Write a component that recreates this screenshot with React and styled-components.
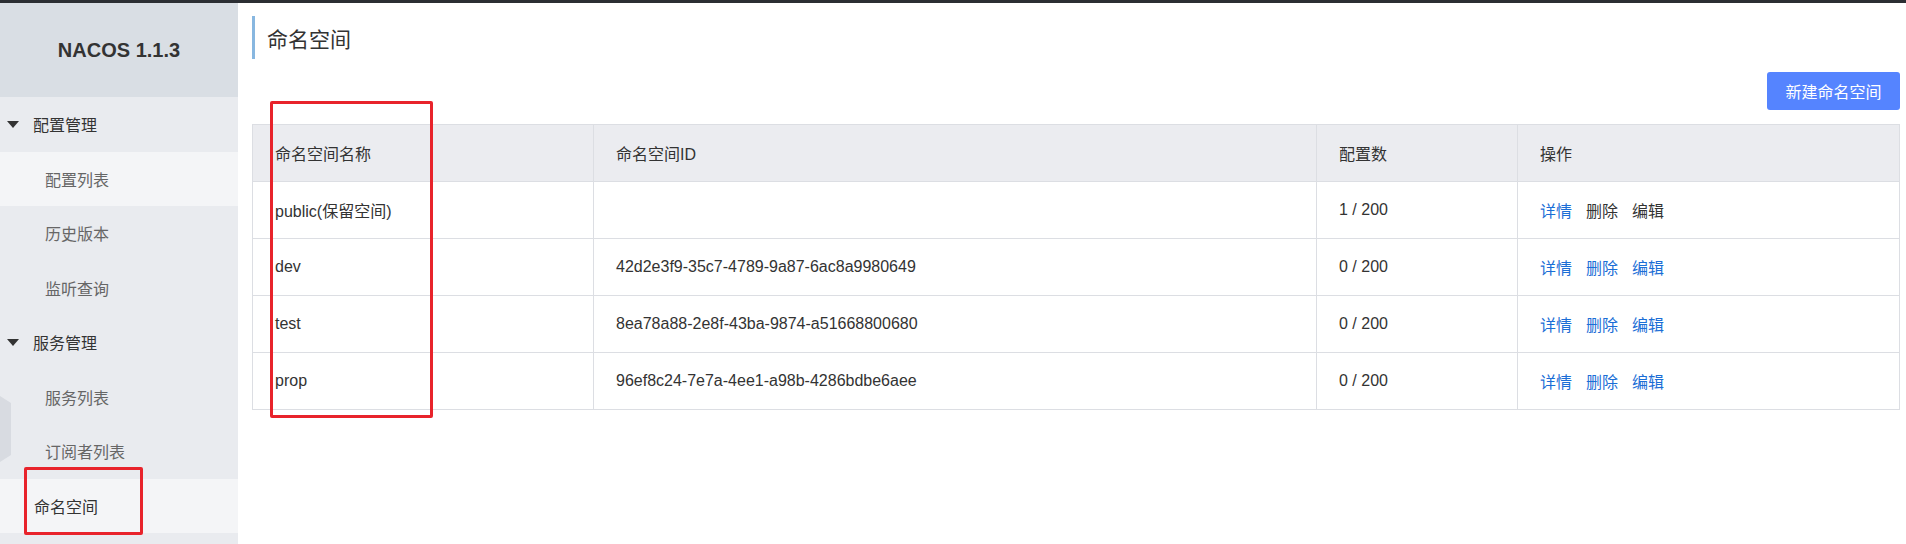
import React from 'react';
import styled, { createGlobalStyle } from 'styled-components';

const GlobalStyle = createGlobalStyle`
  html, body {
    margin: 0;
    padding: 0;
    background: #fff;
  }
  body {
    font-family: "Liberation Sans", "Noto Sans CJK SC", sans-serif;
    font-size: 16px;
    color: #333;
  }
`;

const Page = styled.div`
  position: relative;
  height: 544px;
  display: flex;
  flex-direction: column;
  overflow: hidden;
`;

const TopBar = styled.div`
  height: 3px;
  flex-shrink: 0;
  background: #2b2e33;
`;

const Body = styled.div`
  flex: 1;
  display: flex;
  min-height: 0;
`;

const Sidebar = styled.aside`
  position: relative;
  width: 238px;
  flex-shrink: 0;
  background: #e9ebef;
  display: flex;
  flex-direction: column;
`;

const Logo = styled.div`
  height: 94px;
  flex-shrink: 0;
  background: #d9dee4;
  display: flex;
  align-items: center;
  justify-content: center;
  font-family: "Liberation Sans", sans-serif;
  font-weight: bold;
  font-size: 20px;
  color: #333;
`;

const MenuItem = styled.div`
  height: 54.5px;
  flex-shrink: 0;
  display: flex;
  align-items: center;
  padding-left: ${p => p.$indent}px;
  background: ${p => (p.$light ? '#f4f5f7' : 'transparent')};
  color: ${p => (p.$muted ? '#666' : '#333')};
  font-size: 16px;
`;

const Caret = styled.span`
  width: 0;
  height: 0;
  border-left: 6.5px solid transparent;
  border-right: 6.5px solid transparent;
  border-top: 7px solid #333;
  margin-right: 14px;
`;

const Hexagon = styled.svg`
  position: absolute;
  left: 0;
  top: 393px;
`;

const Main = styled.main`
  flex: 1;
  padding: 13px 6px 0 14px;
  display: flex;
  flex-direction: column;
  min-width: 0;
`;

const Title = styled.h1`
  margin: 0;
  height: 43px;
  border-left: 3px solid #88b7e0;
  padding-left: 12px;
  display: flex;
  align-items: center;
  font-size: 21px;
  font-weight: normal;
  color: #333;
`;

const Toolbar = styled.div`
  margin-top: 13px;
  display: flex;
  justify-content: flex-end;
`;

const PrimaryButton = styled.button`
  width: 133px;
  height: 38px;
  border: none;
  border-radius: 3px;
  background: #5584ff;
  color: #fff;
  font-family: inherit;
  font-size: 16px;
  padding: 0;
`;

const Table = styled.table`
  margin-top: 14px;
  width: 100%;
  border-collapse: collapse;
  table-layout: fixed;
`;

const Row = styled.tr`
  height: 57px;
`;

const Th = styled.th`
  background: #ebecf0;
  border: 1px solid #dcdee3;
  padding: 0 22px;
  text-align: left;
  font-weight: normal;
  color: #333;
`;

const Td = styled.td`
  border: 1px solid #dcdee3;
  padding: 0 22px;
  color: #333;
  white-space: nowrap;
`;

const Actions = styled.div`
  display: flex;
  gap: 14px;
`;

const Action = styled.span`
  color: ${p => (p.$disabled ? '#333' : '#1b6ed6')};
`;

const Annotation = styled.div`
  position: absolute;
  border: 3px solid #e8232b;
  border-radius: 2px;
  box-sizing: border-box;
  pointer-events: none;
`;

const menu = [
  { label: '配置管理', group: true },
  { label: '配置列表', indent: 45, light: true, muted: true },
  { label: '历史版本', indent: 45, muted: true },
  { label: '监听查询', indent: 45, muted: true },
  { label: '服务管理', group: true },
  { label: '服务列表', indent: 45, muted: true },
  { label: '订阅者列表', indent: 45, muted: true },
  { label: '命名空间', indent: 34, light: true },
];

const rows = [
  { name: 'public(保留空间)', id: '', count: '1 / 200', reserved: true },
  { name: 'dev', id: '42d2e3f9-35c7-4789-9a87-6ac8a9980649', count: '0 / 200' },
  { name: 'test', id: '8ea78a88-2e8f-43ba-9874-a51668800680', count: '0 / 200' },
  { name: 'prop', id: '96ef8c24-7e7a-4ee1-a98b-4286bdbe6aee', count: '0 / 200' },
];

export default function App() {
  return (
    <Page>
      <GlobalStyle />
      <TopBar />
      <Body>
        <Sidebar>
          <Logo>NACOS 1.1.3</Logo>
          {menu.map(item => (
            <MenuItem
              key={item.label}
              $indent={item.group ? 7 : item.indent}
              $light={item.light}
              $muted={item.muted}
            >
              {item.group && <Caret />}
              {item.label}
            </MenuItem>
          ))}
          <Hexagon width="12" height="66" viewBox="0 0 12 66">
            <polygon points="0,0 11,7 11,59 0,66" fill="#d8dbe1" />
          </Hexagon>
        </Sidebar>
        <Main>
          <Title>命名空间</Title>
          <Toolbar>
            <PrimaryButton>新建命名空间</PrimaryButton>
          </Toolbar>
          <Table>
            <colgroup>
              <col style={{ width: 341 }} />
              <col style={{ width: 723 }} />
              <col style={{ width: 201 }} />
              <col />
            </colgroup>
            <thead>
              <Row>
                <Th>命名空间名称</Th>
                <Th>命名空间ID</Th>
                <Th>配置数</Th>
                <Th>操作</Th>
              </Row>
            </thead>
            <tbody>
              {rows.map(r => (
                <Row key={r.name}>
                  <Td>{r.name}</Td>
                  <Td>{r.id}</Td>
                  <Td>{r.count}</Td>
                  <Td>
                    <Actions>
                      <Action>详情</Action>
                      <Action $disabled={r.reserved}>删除</Action>
                      <Action $disabled={r.reserved}>编辑</Action>
                    </Actions>
                  </Td>
                </Row>
              ))}
            </tbody>
          </Table>
        </Main>
      </Body>
      <Annotation style={{ left: 270, top: 101, width: 163, height: 317 }} />
      <Annotation style={{ left: 24, top: 467, width: 119, height: 68 }} />
    </Page>
  );
}
